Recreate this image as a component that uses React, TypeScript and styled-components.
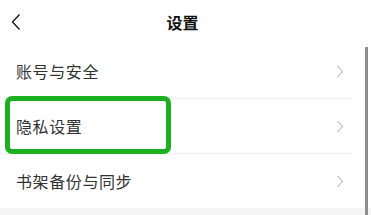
import React from "react";
import styled, { createGlobalStyle } from "styled-components";

const GlobalStyle = createGlobalStyle`
  html, body {
    margin: 0;
    padding: 0;
    background: #fff;
    overflow: hidden;
  }
  body {
    font-family: "Noto Sans CJK SC", "Noto Sans", sans-serif;
  }
`;

const items = ["账号与安全", "隐私设置", "书架备份与同步"];

function BackIcon() {
  return (
    <svg width="12" height="18" viewBox="0 0 12 18">
      <path d="M9.5 1.5 L2.5 9 L9.5 16.5" fill="none" stroke="#111" strokeWidth="1.3" />
    </svg>
  );
}

function Chevron() {
  return (
    <svg width="8" height="13" viewBox="0 0 8 13">
      <path d="M1.5 1 L6.5 6.5 L1.5 12" fill="none" stroke="#b8b8b8" strokeWidth="1.1" />
    </svg>
  );
}

function App() {
  return (
    <Page>
      <GlobalStyle />
      <Header>
        <BackButton>
          <BackIcon />
        </BackButton>
        <Title>设置</Title>
      </Header>
      <List>
        {items.map((label, i) => (
          <Row key={label} last={i === items.length - 1}>
            <Label>{label}</Label>
            <Chevron />
            {label === "隐私设置" && <Highlight />}
          </Row>
        ))}
      </List>
      <Footer />
      <Scrollbar />
    </Page>
  );
}

const Page = styled.div`
  position: relative;
  width: 371px;
  height: 215px;
  overflow: hidden;
  display: flex;
  flex-direction: column;
  background: #fff;
`;

const Header = styled.header`
  height: 44px;
  flex-shrink: 0;
  display: flex;
  align-items: center;
  justify-content: center;
  position: relative;
`;

const BackButton = styled.div`
  position: absolute;
  left: 10px;
  top: 13px;
  display: flex;
`;

const Title = styled.h1`
  margin: 0 6px 0 0;
  font-size: 16px;
  font-weight: 700;
  color: #111;
  line-height: 20px;
  padding-bottom: 1px;
`;

const List = styled.div`
  display: flex;
  flex-direction: column;
  flex-shrink: 0;
`;

const Row = styled.div<{ last?: boolean }>`
  position: relative;
  height: 54px;
  padding: 0 9px 0 16px;
  margin-right: 18px;
  display: flex;
  align-items: center;
  justify-content: space-between;
  border-bottom: ${(p) => (p.last ? "none" : "1px solid #efefef")};
`;

const Label = styled.span`
  font-size: 16px;
  color: #333;
  letter-spacing: 0.6px;
`;

const Highlight = styled.div`
  position: absolute;
  left: 5px;
  top: -3px;
  width: 156px;
  height: 48px;
  border: 5px solid #1caf1f;
  border-radius: 7px;
  pointer-events: none;
`;

const Scrollbar = styled.div`
  position: absolute;
  right: 3px;
  top: 47px;
  bottom: 0;
  width: 3px;
  background: #8f8f8f;
`;

const Footer = styled.div`
  flex: 1;
  background: #f5f5f5;
`;

export default App;
